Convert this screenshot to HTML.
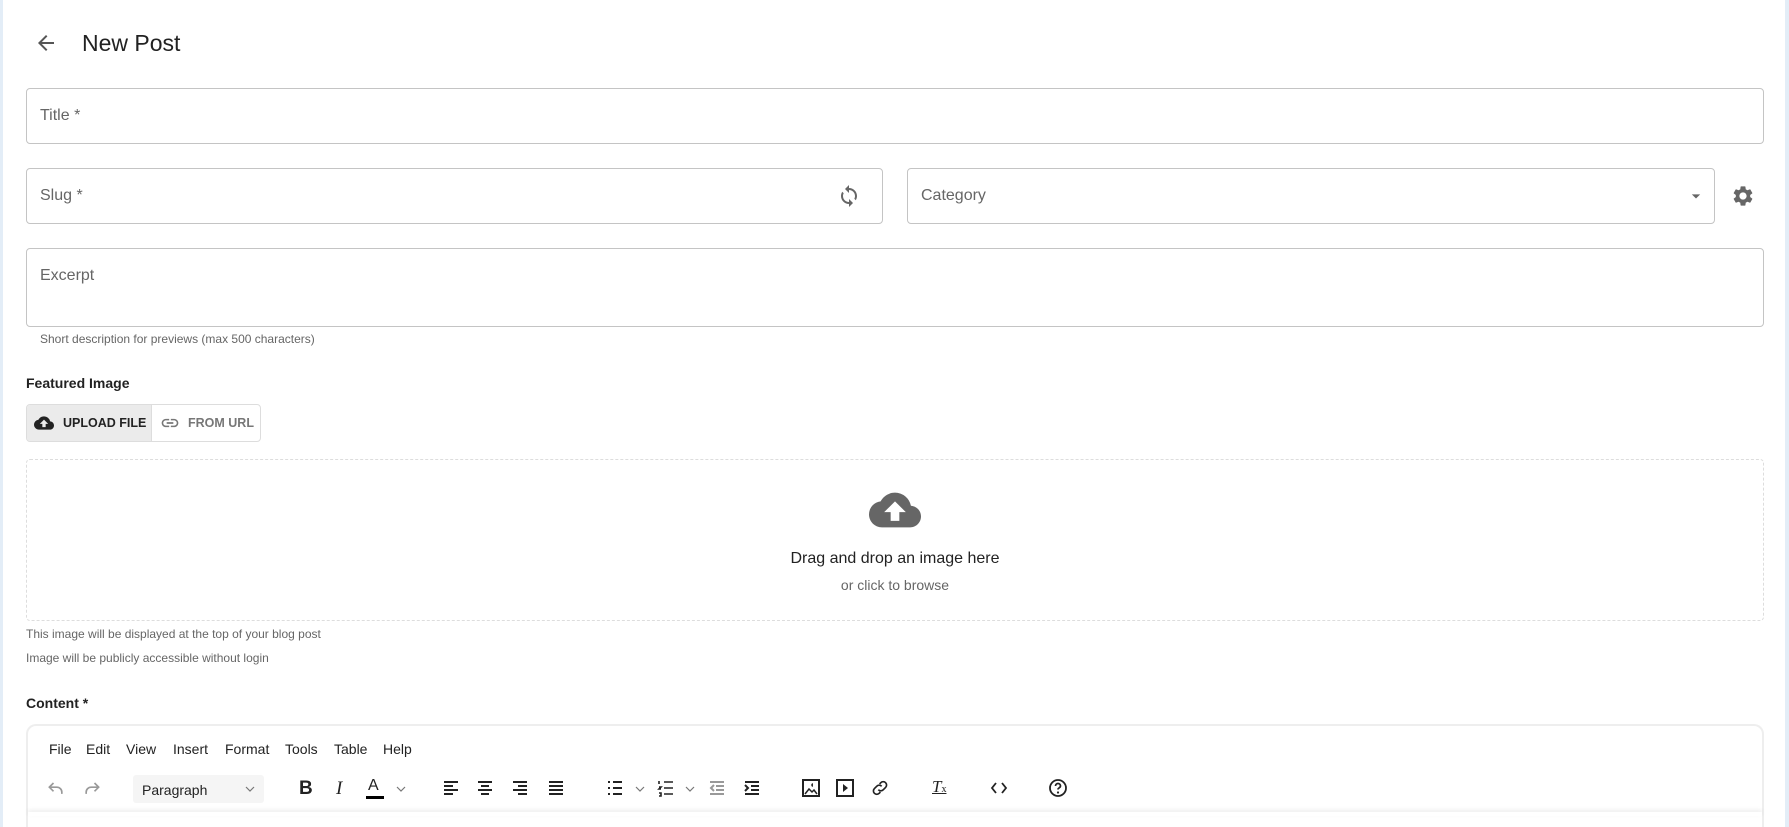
<!DOCTYPE html>
<html style="width:1789px;height:827px;overflow:hidden"><head><meta charset="utf-8"><style>
*{box-sizing:border-box;margin:0;padding:0}
body{width:1789px;height:827px;overflow:hidden;background:#fff;font-family:"Liberation Sans",sans-serif;color:#212121;position:relative}
.a{position:absolute}
.box{position:absolute;border:1px solid #c4c4c4;border-radius:4px;background:#fff}
.lbl{position:absolute;font-size:16px;color:#666}
.help{position:absolute;font-size:12px;color:#666}
.menu span{position:absolute;top:741px;font-size:14px;color:#222}
svg{position:absolute}
</style></head><body>
<div class="a" style="left:0;top:0;width:3px;height:827px;background:#e3edf7"></div>
<div class="a" style="left:1785px;top:0;width:4px;height:827px;background:#e3edf7"></div>
<svg style="left:34px;top:31px" width="24" height="24" viewBox="0 0 24 24"><path d="M20 11H7.83l5.59-5.59L12 4l-8 8 8 8 1.41-1.41L7.83 13H20z" fill="#555"/></svg>
<div class="a" style="left:82px;top:30px;font-size:23px;color:#222">New Post</div>

<div class="box" style="left:26px;top:88px;width:1738px;height:56px"></div>
<div class="lbl" style="left:40px;top:107px">Title *</div>

<div class="box" style="left:26px;top:168px;width:857px;height:56px"></div>
<div class="lbl" style="left:40px;top:187px">Slug *</div>
<svg style="left:837px;top:184px" width="24" height="24" viewBox="0 0 24 24"><path d="M12 4V1L8 5l4 4V6c3.31 0 6 2.690 6 6 0 1.01-.25 1.970-.7 2.8l1.46 1.46C19.54 15.03 20 13.57 20 12c0-4.420-3.58-8-8-8zm0 14c-3.31 0-6-2.69-6-6 0-1.010.25-1.970.7-2.8L5.24 7.74C4.46 8.97 4 10.43 4 12c0 4.42 3.58 8 8 8v3l4-4-4-4v3z" fill="#666"/></svg>

<div class="box" style="left:907px;top:168px;width:808px;height:56px"></div>
<div class="lbl" style="left:921px;top:187px">Category</div>
<svg style="left:1686px;top:186px" width="20" height="20" viewBox="0 0 24 24"><path d="M7 10l5 5 5-5z" fill="#666"/></svg>
<svg style="left:1731px;top:184px" width="24" height="24" viewBox="0 0 24 24"><path d="M19.14 12.94c.04-.3.06-.61.06-.94 0-.32-.02-.64-.07-.94l2.03-1.58a.49.49 0 00.12-.61l-1.92-3.32a.488.488 0 00-.59-.22l-2.39.96c-.5-.38-1.03-.7-1.62-.94l-.36-2.54a.484.484 0 00-.48-.41h-3.84c-.24 0-.43.17-.47.41l-.36 2.54c-.59.24-1.13.57-1.62.94l-2.39-.96c-.22-.08-.47 0-.59.22L2.74 8.87c-.12.21-.08.47.12.61l2.03 1.58c-.05.3-.09.63-.09.94s.02.64.07.94l-2.030 1.58a.49.49 0 00-.12.61l1.92 3.32c.12.22.37.29.59.22l2.39-.96c.5.38 1.03.7 1.62.94l.36 2.54c.05.24.24.41.48.41h3.84c.24 0 .44-.17.47-.41l.36-2.54c.59-.24 1.13-.56 1.62-.94l2.39.96c.22.08.47 0 .59-.22l1.92-3.32c.12-.22.07-.47-.12-.61l-2.01-1.58zM12 15.6c-1.98 0-3.6-1.62-3.6-3.6s1.62-3.6 3.6-3.6 3.6 1.62 3.6 3.6-1.62 3.6-3.6 3.6z" fill="#666"/></svg>

<div class="box" style="left:26px;top:248px;width:1738px;height:79px"></div>
<div class="lbl" style="left:40px;top:267px">Excerpt</div>
<div class="help" style="left:40px;top:332px">Short description for previews (max 500 characters)</div>

<div class="a" style="left:26px;top:375px;font-size:14px;font-weight:bold;color:#222">Featured Image</div>
<div class="a" style="left:26px;top:404px;width:235px;height:38px;border:1px solid #ddd;border-radius:4px;overflow:hidden">
 <div class="a" style="left:0;top:0;width:125px;height:36px;background:#ebebeb;border-right:1px solid #ddd"></div>
 <svg style="left:7px;top:8px" width="20" height="20" viewBox="0 0 24 24"><path d="M19.35 10.04A7.49 7.49 0 0012 4C9.11 4 6.6 5.64 5.35 8.04A5.994 5.994 0 000 14c0 3.31 2.69 6 6 6h13c2.76 0 5-2.24 5-5 0-2.64-2.05-4.78-4.65-4.96zM14 13v4h-4v-4H7l5-5 5 5h-3z" fill="#222"/></svg>
 <div class="a" style="left:36px;top:11px;font-size:12.5px;font-weight:bold;color:#222">UPLOAD FILE</div>
 <svg style="left:133px;top:8px" width="20" height="20" viewBox="0 0 24 24"><path d="M3.9 12c0-1.71 1.39-3.1 3.1-3.1h4V7H7c-2.76 0-5 2.24-5 5s2.24 5 5 5h4v-1.9H7c-1.71 0-3.1-1.39-3.1-3.1zM8 13h8v-2H8v2zm9-6h-4v1.9h4c1.71 0 3.1 1.39 3.1 3.1s-1.39 3.1-3.1 3.1h-4V17h4c2.76 0 5-2.24 5-5s-2.24-5-5-5z" fill="#777"/></svg>
 <div class="a" style="left:161px;top:11px;font-size:12.5px;font-weight:bold;color:#777">FROM URL</div>
</div>

<div class="a" style="left:26px;top:459px;width:1738px;height:162px;border:1px dashed #ddd;border-radius:4px"></div>
<svg style="left:869px;top:484px" width="52" height="52" viewBox="0 0 24 24"><path d="M19.35 10.04A7.49 7.49 0 0012 4C9.11 4 6.6 5.64 5.35 8.04A5.994 5.994 0 000 14c0 3.31 2.69 6 6 6h13c2.76 0 5-2.24 5-5 0-2.64-2.05-4.78-4.65-4.96zM14 13v4h-4v-4H7l5-5 5 5h-3z" fill="#666"/></svg>
<div class="a" style="left:26px;top:550px;width:1738px;text-align:center;font-size:16px;color:#222">Drag and drop an image here</div>
<div class="a" style="left:26px;top:577px;width:1738px;text-align:center;font-size:14px;color:#666">or click to browse</div>
<div class="help" style="left:26px;top:627px">This image will be displayed at the top of your blog post</div>
<div class="help" style="left:26px;top:651px">Image will be publicly accessible without login</div>

<div class="a" style="left:26px;top:695px;font-size:14px;font-weight:bold;color:#222">Content *</div>
<div class="a" style="left:26px;top:724px;width:1738px;height:103px;border:2px solid #eee;border-bottom:none;border-radius:10px 10px 0 0"></div>
<div class="a" style="left:28px;top:812px;width:1734px;height:4px;box-shadow:0 -2px 4px rgba(0,0,0,.08)"></div>
<div class="menu"><span style="left:49px">File</span><span style="left:86px">Edit</span><span style="left:126px">View</span><span style="left:173px">Insert</span><span style="left:225px">Format</span><span style="left:285px">Tools</span><span style="left:334px">Table</span><span style="left:383px">Help</span></div>

<div class="a" style="left:133px;top:775px;width:131px;height:28px;background:#f5f5f5;border-radius:3px"></div>
<div class="a" style="left:142px;top:782px;font-size:14px;color:#222">Paragraph</div>
<svg style="left:244px;top:783px" width="12" height="12" viewBox="0 0 12 12"><path d="M2 4l4 4 4-4" stroke="#777" fill="none" stroke-width="1.2"/></svg>
<svg style="left:46px;top:778px" width="20" height="20" viewBox="0 0 24 24"><path d="M9 6L4 11l5 5M4 11h9a6 6 0 016 6v2" stroke="#999" fill="none" stroke-width="2"/></svg>
<svg style="left:82px;top:778px" width="20" height="20" viewBox="0 0 24 24"><path d="M15 6l5 5-5 5M20 11h-9a6 6 0 00-6 6v2" stroke="#999" fill="none" stroke-width="2"/></svg>
<div class="a" style="left:299px;top:778px;font-size:19px;font-weight:bold;color:#222">B</div>
<div class="a" style="left:336px;top:778px;font-size:19px;font-style:italic;font-family:'Liberation Serif',serif;color:#222">I</div>
<div class="a" style="left:368px;top:777px;font-size:16px;color:#222">A</div>
<div class="a" style="left:366px;top:796px;width:18px;height:3px;background:#000"></div>
<svg style="left:395px;top:783px" width="12" height="12" viewBox="0 0 12 12"><path d="M2 4l4 4 4-4" stroke="#777" fill="none" stroke-width="1.2"/></svg>
<svg style="left:442px;top:779px" width="18" height="18" viewBox="0 0 18 18"><path d="M2 3h14M2 7h9M2 11h14M2 15h9" stroke="#222" stroke-width="2"/></svg>
<svg style="left:476px;top:779px" width="18" height="18" viewBox="0 0 18 18"><path d="M2 3h14M5 7h8M2 11h14M5 15h8" stroke="#222" stroke-width="2"/></svg>
<svg style="left:511px;top:779px" width="18" height="18" viewBox="0 0 18 18"><path d="M2 3h14M7 7h9M2 11h14M7 15h9" stroke="#222" stroke-width="2"/></svg>
<svg style="left:547px;top:779px" width="18" height="18" viewBox="0 0 18 18"><path d="M2 3h14M2 7h14M2 11h14M2 15h14" stroke="#222" stroke-width="2"/></svg>
<svg style="left:606px;top:779px" width="18" height="18" viewBox="0 0 18 18"><path d="M2 3h2M2 9h2M2 15h2M7 3h9M7 9h9M7 15h9" stroke="#222" stroke-width="2"/></svg>
<svg style="left:634px;top:783px" width="12" height="12" viewBox="0 0 12 12"><path d="M2 4l4 4 4-4" stroke="#777" fill="none" stroke-width="1.2"/></svg>
<svg style="left:657px;top:779px" width="18" height="18" viewBox="0 0 18 18"><path d="M2 2v3M2 8h2l-2 2h2M2 14h2v3H2M7 3h9M7 9h9M7 15h9" stroke="#222" stroke-width="1.6" fill="none"/></svg>
<svg style="left:684px;top:783px" width="12" height="12" viewBox="0 0 12 12"><path d="M2 4l4 4 4-4" stroke="#777" fill="none" stroke-width="1.2"/></svg>
<svg style="left:708px;top:779px" width="18" height="18" viewBox="0 0 18 18"><path d="M2 3h14M8 7h8M8 11h8M2 15h14M6 6L3 9l3 3" stroke="#999" stroke-width="2" fill="none"/></svg>
<svg style="left:743px;top:779px" width="18" height="18" viewBox="0 0 18 18"><path d="M2 3h14M8 7h8M8 11h8M2 15h14M2 6l3 3-3 3" stroke="#222" stroke-width="2" fill="none"/></svg>
<svg style="left:801px;top:778px" width="20" height="20" viewBox="0 0 20 20"><rect x="2" y="2" width="16" height="16" fill="none" stroke="#222" stroke-width="2"/><path d="M4 16l4-5 3 3 2-2 3 4M12 6a1 1 0 100 2" stroke="#222" stroke-width="1.5" fill="none"/></svg>
<svg style="left:835px;top:778px" width="20" height="20" viewBox="0 0 20 20"><rect x="2" y="2" width="16" height="16" fill="none" stroke="#222" stroke-width="2"/><path d="M8 6v8l5-4z" fill="#222"/></svg>
<svg style="left:870px;top:778px" width="20" height="20" viewBox="0 0 24 24"><path d="M10 14a4 4 0 005.7.3l3-3a4 4 0 00-5.7-5.7l-1.5 1.5M14 10a4 4 0 00-5.7-.3l-3 3a4 4 0 005.7 5.7l1.5-1.5" stroke="#222" stroke-width="2" fill="none"/></svg>
<div class="a" style="left:932px;top:777px;font-size:17px;font-style:italic;font-family:'Liberation Serif',serif;color:#222;text-decoration:underline">T<span style="font-size:10px;font-style:normal">x</span></div>
<svg style="left:990px;top:780px" width="18" height="16" viewBox="0 0 18 16"><path d="M6 3L2 8l4 5M12 3l4 5-4 5" stroke="#222" stroke-width="1.8" fill="none"/></svg>
<svg style="left:1048px;top:778px" width="20" height="20" viewBox="0 0 20 20"><circle cx="10" cy="10" r="8" fill="none" stroke="#222" stroke-width="1.8"/><path d="M7.5 8a2.5 2.5 0 115 0c0 1.8-2.5 1.8-2.5 3.5" stroke="#222" stroke-width="1.8" fill="none"/><circle cx="10" cy="14.5" r="1.1" fill="#222"/></svg>
</body></html>
